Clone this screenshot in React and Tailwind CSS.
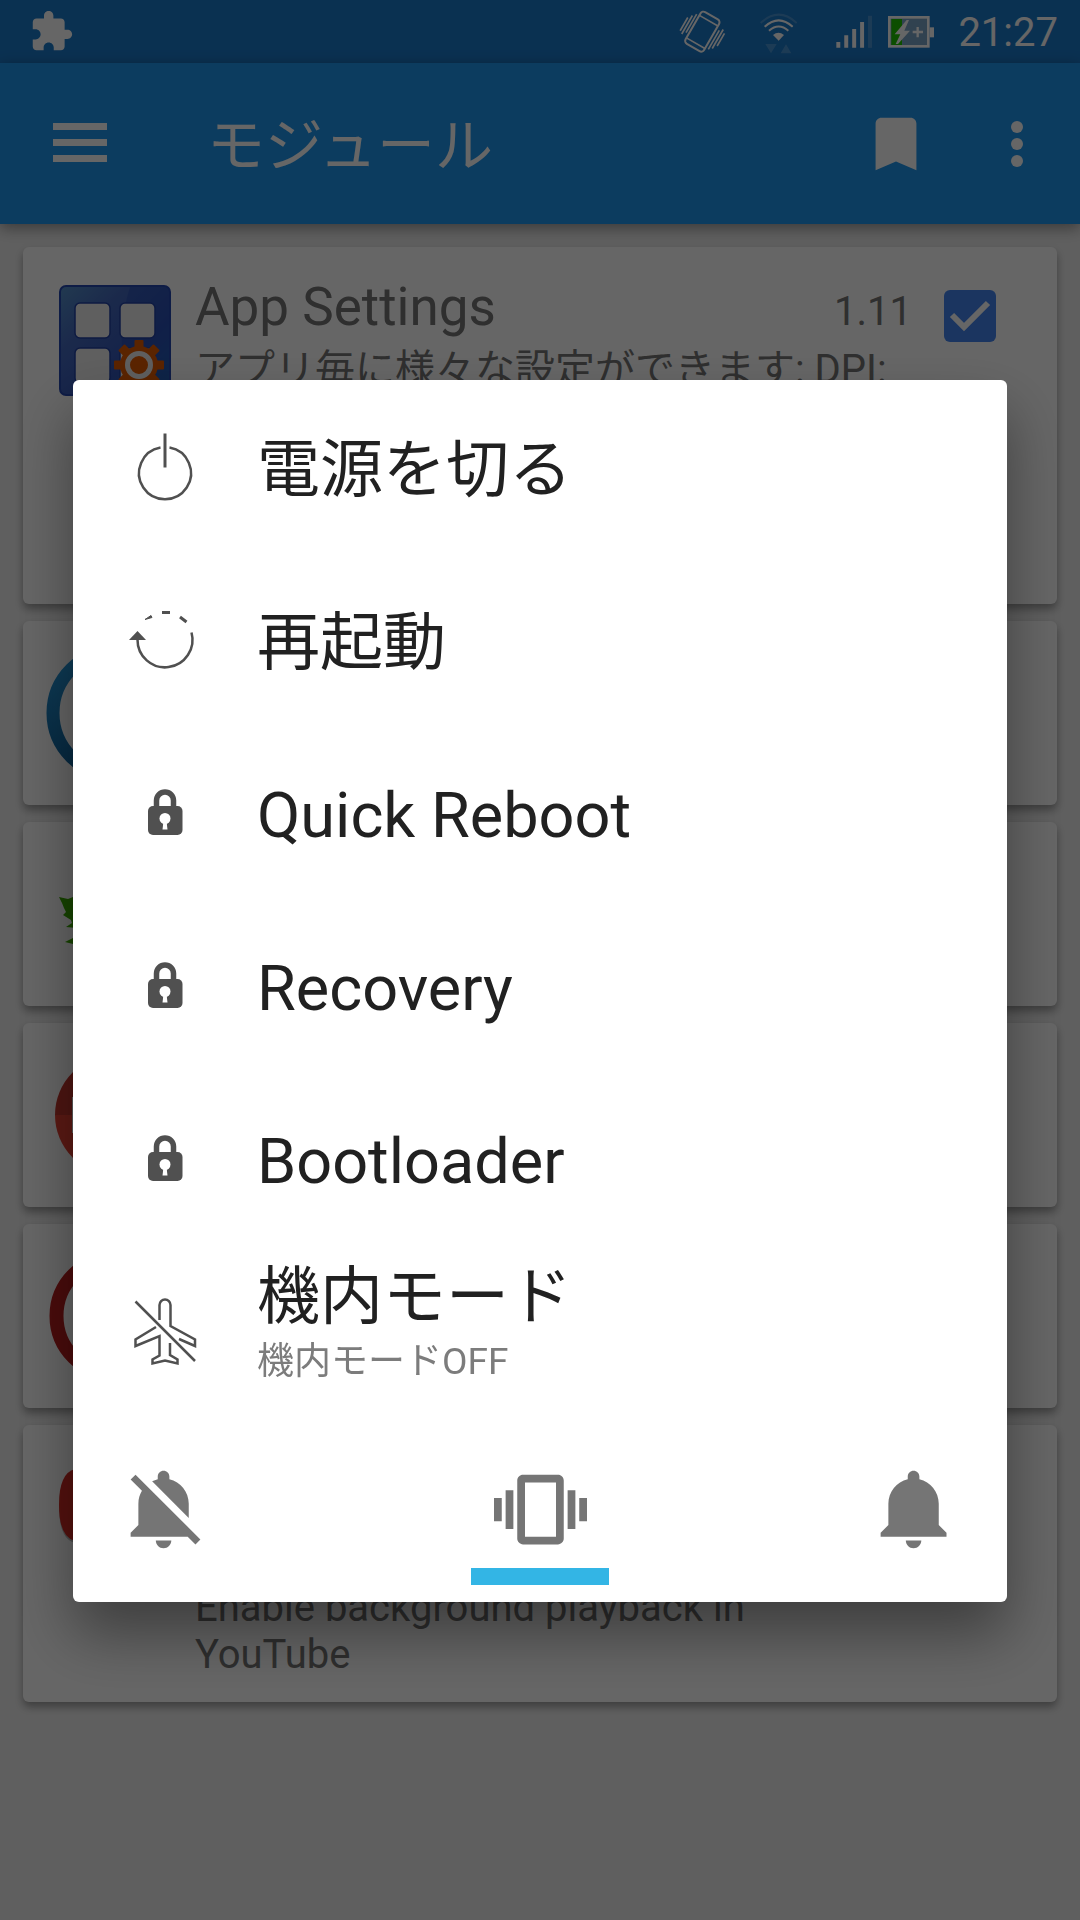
import { useState } from 'react'

const iconBox = 'w-28 h-28 shrink-0 overflow-visible'

function AppSettingsIcon() {
  return (
    <svg viewBox="0 0 112 112" className={iconBox}>
      <defs>
        <linearGradient id="tile" x1="0" y1="0" x2="1" y2="1">
          <stop offset="0" stopColor="#5590c8" />
          <stop offset="0.3" stopColor="#4468bc" />
          <stop offset="0.65" stopColor="#3355b8" />
          <stop offset="1" stopColor="#2070b4" />
        </linearGradient>
      </defs>
      <rect x="1" y="3" width="110" height="109" rx="6" fill="url(#tile)" stroke="#2547ae" strokeWidth="2" />
      <path d="M71 4h36q3 0 3 3v104H88Q48 80 71 4z" fill="#1f45b0" opacity="0.4" />
      <g fill="#eeeeee" stroke="#2343a4" strokeWidth="1.5">
        <rect x="16" y="20" width="35" height="35" rx="5" />
        <rect x="61" y="20" width="35" height="35" rx="5" />
        <rect x="16" y="65" width="35" height="35" rx="5" />
        <rect x="61" y="65" width="35" height="35" rx="5" />
      </g>
      <g fill="#e25a00">
        <circle cx="80" cy="82" r="19" />
        {[0, 45, 90, 135].map(a => (
          <rect key={a} x="75.5" y="57" width="9" height="50" rx="1" transform={`rotate(${a} 80 82)`} />
        ))}
      </g>
      <circle cx="80" cy="82" r="11.5" fill="none" stroke="#eeeeee" strokeWidth="5" />
    </svg>
  )
}

function BlueRingIcon() {
  return (
    <svg viewBox="0 0 112 112" className={iconBox}>
      <defs>
        <linearGradient id="blueRing" x1="0" y1="0" x2="0" y2="1">
          <stop offset="0" stopColor="#269ade" />
          <stop offset="1" stopColor="#0f629c" />
        </linearGradient>
      </defs>
      <circle cx="56" cy="56" r="62" fill="none" stroke="url(#blueRing)" strokeWidth="13" />
    </svg>
  )
}

function LeafIcon() {
  return (
    <svg viewBox="0 0 112 112" className={iconBox}>
      <path
        d="M0 39l9 2 5-2 20 6v30H18v-5l-11-1 6-4-1-3-8-5 3-3-2-4-2-5zM6 84l8-4 20-3v9H14z"
        fill="#3aac00"
      />
    </svg>
  )
}

function RedDiscIcon() {
  return (
    <svg viewBox="0 0 112 112" className={iconBox}>
      <path d="M-4 56a60 60 0 0 1 120 0z" fill="#c3362d" />
      <path d="M-4 56a60 60 0 0 0 120 0z" fill="#e64032" />
      <rect x="13" y="38" width="30" height="36" fill="#eeeeee" />
    </svg>
  )
}

function RedRingIcon() {
  return (
    <svg viewBox="0 0 112 112" className={iconBox}>
      <circle cx="56" cy="56" r="58.5" fill="none" stroke="#ba1e1e" strokeWidth="14" />
    </svg>
  )
}

function PlayerIcon() {
  return (
    <svg viewBox="0 0 112 112" className={iconBox}>
      <path d="M16 10h80q16 4 16 36t-16 36H16Q0 78 0 46T16 10z" fill="#000000" opacity="0.25" />
      <path d="M16 8h80q16 4 16 36t-16 36H16Q0 76 0 44T16 8z" fill="#d42b24" />
    </svg>
  )
}

function PowerIcon() {
  return (
    <svg viewBox="0 0 72 72" className="w-18 h-18 shrink-0" fill="none" stroke="#505050">
      <path d="M31.5 16.6a26 26 0 1 0 9 0" strokeWidth="2.5" />
      <path d="M36 2.5v34" strokeWidth="3" />
    </svg>
  )
}

function RestartIcon() {
  return (
    <svg viewBox="0 0 72 72" className="w-18 h-18 shrink-0" fill="none" stroke="#505050">
      <path d="M8.5 35.5a27.5 27.5 0 1 0 54-7" strokeWidth="2.5" />
      <path d="M0 36l8.5-9 8.5 9z" fill="#505050" stroke="none" />
      <path d="M33 8.5h8M51 13l6.5 5" strokeWidth="3" />
      <path d="M16 15.5l6-4 1 2z" fill="#505050" strokeWidth="1" />
    </svg>
  )
}

function LockIcon() {
  return (
    <svg viewBox="0 0 72 72" className="w-18 h-18 shrink-0">
      <path d="M27.5 31v-7.5a8.5 8.5 0 0 1 17 0V31" fill="none" stroke="#505050" strokeWidth="5.5" />
      <rect x="19" y="29" width="34.5" height="29" rx="5" fill="#505050" />
      <circle cx="36" cy="41.5" r="5.5" fill="#ffffff" />
      <path d="M34.5 44h3l1 8.5h-5z" fill="#ffffff" />
    </svg>
  )
}

function AirplaneOffIcon() {
  return (
    <svg viewBox="0 0 72 72" className="w-18 h-18 shrink-0" fill="none" stroke="#505050" strokeWidth="2.5">
      <path d="M30.5 24V9a5.5 5.5 0 0 1 11 0v21L66 43.5V50l-16-7" />
      <path d="M27 31L6.5 43.5V50l24-10v19.5l-7 4v4l12.5-3 12.5 3v-4L41 59V47" />
      <path d="M6.5 5.5L66 65" />
    </svg>
  )
}

const MODULES = [
  { id: 'app-settings', Icon: AppSettingsIcon, height: 'min-h-[357px]', title: 'App Settings', version: '1.11', description: 'アプリ毎に様々な設定ができます: DPI:' },
  { id: 'blue-ring', Icon: BlueRingIcon, height: 'min-h-[184px]' },
  { id: 'leaf', Icon: LeafIcon, height: 'min-h-[184px]' },
  { id: 'red-disc', Icon: RedDiscIcon, height: 'min-h-[184px]' },
  { id: 'red-ring', Icon: RedRingIcon, height: 'min-h-[184px]' },
  { id: 'player', Icon: PlayerIcon, height: 'min-h-[277px]', description: 'Enable background playback in YouTube' },
]

const ACTIONS = [
  { id: 'power', Icon: PowerIcon, label: '電源を切る' },
  { id: 'restart', Icon: RestartIcon, label: '再起動' },
  { id: 'quick', Icon: LockIcon, label: 'Quick Reboot' },
  { id: 'recovery', Icon: LockIcon, label: 'Recovery' },
  { id: 'bootloader', Icon: LockIcon, label: 'Bootloader' },
  { id: 'airplane', Icon: AirplaneOffIcon, label: '機内モード', note: '機内モードOFF' },
]

const RINGERS = [
  { id: 'silent', label: 'Silent', path: 'M11.5 22c1.1 0 2-.9 2-2h-4c0 1.1.9 2 2 2zM18 10.5c0-3.07-2.13-5.64-5-6.32V3.5c0-.83-.67-1.5-1.5-1.5S10 2.67 10 3.5v.68c-.51.12-.99.32-1.45.56L18 14.18V10.5zm-.27 8.5l2 2L21 19.73 4.27 3 3 4.27l2.92 2.92C5.34 8.16 5 9.29 5 10.5V16l-2 2v1h14.73z' },
  { id: 'vibrate', label: 'Vibrate', path: 'M0 15h2V9H0v6zm3 2h2V7H3v10zm19-8v6h2V9h-2zm-3 8h2V7h-2v10zM16.5 3h-9C6.67 3 6 3.67 6 4.5v15c0 .83.67 1.5 1.5 1.5h9c.83 0 1.5-.67 1.5-1.5v-15c0-.83-.67-1.5-1.5-1.5zM16 19H8V5h8v14z' },
  { id: 'sound', label: 'Sound', path: 'M11.5 22c1.1 0 2-.9 2-2h-4c0 1.1.9 2 2 2zm6.5-6v-5.5c0-3.07-2.13-5.64-5-6.32V3.5c0-.83-.67-1.5-1.5-1.5S10 2.67 10 3.5v.68c-2.87.68-5 3.25-5 6.32V16l-2 2v1h17v-1l-2-2z' },
]

function StatusBar() {
  return (
    <div className="h-[63px] bg-[#1b7acb] flex items-center pl-[29px] pr-[22px] text-white">
      <svg viewBox="0 0 24 24" className="w-[45px] h-[45px] mr-auto" fill="currentColor">
        <path d="M20.5 11H19V7c0-1.1-.9-2-2-2h-4V3.5C13 2.12 11.88 1 10.5 1S8 2.12 8 3.5V5H4c-1.1 0-1.99.9-1.99 2v3.8H3.5c1.49 0 2.7 1.21 2.7 2.7s-1.21 2.7-2.7 2.7H2V20c0 1.1.9 2 2 2h3.8v-1.5c0-1.49 1.21-2.7 2.7-2.7s2.7 1.21 2.7 2.7V22H17c1.1 0 2-.9 2-2v-4h1.5c1.38 0 2.5-1.12 2.5-2.5S21.88 11 20.5 11z" />
      </svg>

      {/* vibrate */}
      <svg viewBox="54 0 141 189" className="w-[47px] h-[63px] mr-[34px]" fill="none" stroke="currentColor" strokeWidth="5">
        <g transform="rotate(30 124 95)">
          <rect x="92" y="40" width="64" height="110" rx="10" strokeWidth="6" />
          <path d="M92 57h64M92 135h64" />
          <path d="M65 80v46M74 68v64M83 58v64M166 66v66M175 58v66M184 66v44" />
        </g>
      </svg>

      {/* wifi */}
      <svg viewBox="297 0 111 189" className="w-[37px] h-[63px] mr-[39px]" fill="none" stroke="currentColor" strokeWidth="6">
        <path d="M299 69q54-50 108 0" opacity="0.2" />
        <path d="M311 80q42-38 84 0" />
        <path d="M324 92q29-25 58 0" />
        <path d="M336 105q16-14 33 0l-16 17z" fill="currentColor" stroke="none" />
        <path d="M313 132h34l-17 28zM359 160h32l-16-27z" fill="currentColor" stroke="none" opacity="0.2" />
      </svg>

      {/* signal */}
      <svg viewBox="527 0 109 189" className="w-9 h-[63px] mr-4" fill="currentColor">
        <path d="M528 126h12v18h-12zM552 106h12v38h-12zM576 87h12v57h-12zM600 66h12v78h-12z" />
        <path d="M624 47h12v97h-12z" opacity="0.2" />
      </svg>

      {/* battery */}
      <svg viewBox="684 0 138 189" className="w-[46px] h-[63px] mr-6">
        <rect x="688" y="52" width="117" height="87" fill="#7ca5c8" stroke="#ffffff" strokeWidth="8" />
        <rect x="694" y="57" width="32" height="78" fill="#1fc400" />
        <path d="M809 82h13v30h-13z" fill="#ffffff" />
        <path d="M740 60l-36 43h17l-14 29h7l36-40h-17l14-32z" fill="#ffffff" />
        <path d="M758 96h31M773 81v31" stroke="#ffffff" strokeWidth="7" />
      </svg>

      <span className="pt-0.5 text-[40px] leading-[44px]">21:27</span>
    </div>
  )
}

function AppBar() {
  return (
    <header className="relative h-[161px] bg-[#1e96ee] flex items-center pl-[53px] pr-[49px] text-white shadow-[0_4px_14px_rgba(0,0,0,0.4)]">
      <button aria-label="Menu" className="mr-[100px]">
        <svg viewBox="0 0 54 42" className="w-[54px] h-[42px]" fill="currentColor">
          <path d="M0 0h54v7H0zM0 16h54v7H0zM0 32h54v7H0z" />
        </svg>
      </button>
      <h1 className="pt-1 text-[58px] leading-[64px]">モジュール</h1>
      <button aria-label="Bookmark" className="ml-auto mr-[72px]">
        <svg viewBox="0 0 24 24" className="w-[70px] h-[70px]" fill="currentColor">
          <path d="M17 3H7c-1.1 0-2 .9-2 2v16l7-3 7 3V5c0-1.1-.9-2-2-2z" />
        </svg>
      </button>
      <button aria-label="More options">
        <svg viewBox="0 0 28 48" className="w-7 h-12" fill="currentColor">
          <circle cx="14" cy="7" r="6" />
          <circle cx="14" cy="24" r="6" />
          <circle cx="14" cy="41" r="6" />
        </svg>
      </button>
    </header>
  )
}

function ModuleCard({ module }) {
  const [enabled, setEnabled] = useState(true)
  const { Icon, height, title, version, description } = module

  return (
    <article className={`${height} bg-white rounded-md flex items-start pl-9 pr-[61px] text-[#757575] shadow-[0_5px_8px_rgba(0,0,0,0.35)]`}>
      <div className="pt-9 mr-6"><Icon /></div>
      <div className={`flex-1 self-stretch flex flex-col pt-[30px] pb-6 ${title ? '' : 'justify-end'}`}>
        {title && (
          <div className="flex justify-between items-baseline mb-1">
            <h2 className="text-[53px] leading-[60px]">{title}</h2>
            <span className="text-[40px]">{version}</span>
          </div>
        )}
        {description && <p className="pr-3 text-[40px] leading-[47px]">{description}</p>}
      </div>
      {title ? (
        <label className="relative block w-[52px] h-[52px] mt-[43px] ml-8">
          <input
            type="checkbox"
            aria-label={title}
            checked={enabled}
            onChange={e => setEnabled(e.target.checked)}
            className="peer block appearance-none w-[52px] h-[52px] rounded-md border-4 border-[#757575] checked:border-0 checked:bg-[#4486f0]"
          />
          <svg viewBox="0 0 52 52" className="hidden peer-checked:block absolute inset-0 pointer-events-none" fill="none" stroke="#ffffff" strokeWidth="6">
            <path d="M8 25l12 12L44 13" />
          </svg>
        </label>
      ) : (
        <div className="w-[84px] shrink-0" />
      )}
    </article>
  )
}

function PowerMenu() {
  const [ringer, setRinger] = useState('vibrate')

  return (
    <div className="fixed inset-0 bg-black/60 pt-[62px] px-[73px] flex items-center">
      <div role="dialog" aria-modal="true" className="w-full bg-white rounded-md text-[#212121] shadow-[0_32px_60px_rgba(0,0,0,0.4)]">
        {ACTIONS.map(({ id, Icon, label, note }) => (
          <button key={id} className="w-full h-[173px] flex items-center px-14 gap-14 text-left">
            <Icon />
            <span className={note ? 'block pb-5' : 'block pt-1.5'}>
              <span className="block text-[63px] leading-[74px]">{label}</span>
              {note && <span className="block mt-1.5 text-[37px] leading-[44px] text-[#7c7c7c]">{note}</span>}
            </span>
          </button>
        ))}

        {/* Ringer mode */}
        <div className="flex justify-between px-[23px] pb-[17px]">
          {RINGERS.map(({ id, label, path }) => (
            <button
              key={id}
              aria-label={label}
              aria-pressed={ringer === id}
              onClick={() => setRinger(id)}
              className="w-[138px] flex flex-col items-center gap-3 pt-[45px]"
            >
              <svg viewBox="0 0 24 24" className="w-[93px] h-[93px]" fill="#757575">
                <path d={path} />
              </svg>
              <span className={`block w-full h-[17px] ${ringer === id ? 'bg-[#33b5e5]' : ''}`} />
            </button>
          ))}
        </div>
      </div>
    </div>
  )
}

export default function App() {
  return (
    <div className="min-h-screen bg-[#eeeeee] font-[Roboto,'Noto_Sans_CJK_JP',sans-serif]">
      <StatusBar />
      <AppBar />
      <main className="p-[23px] flex flex-col gap-[17px]">
        {MODULES.map(m => <ModuleCard key={m.id} module={m} />)}
      </main>
      <PowerMenu />
    </div>
  )
}
